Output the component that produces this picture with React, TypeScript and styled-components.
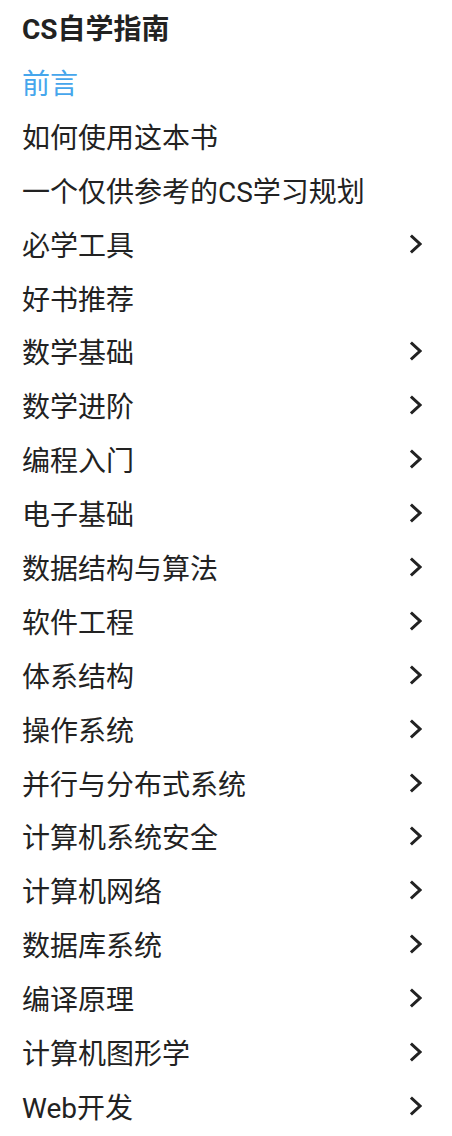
import React from "react";
import styled, { createGlobalStyle } from "styled-components";

const GlobalStyle = createGlobalStyle`
  html, body {
    margin: 0;
    padding: 0;
    background: #ffffff;
  }
  body {
    font-family: Roboto, "Noto Sans CJK SC", sans-serif;
    -webkit-font-smoothing: antialiased;
  }
`;

const items: { label: string; hasChildren: boolean; active?: boolean }[] = [
  { label: "前言", hasChildren: false, active: true },
  { label: "如何使用这本书", hasChildren: false },
  { label: "一个仅供参考的CS学习规划", hasChildren: false },
  { label: "必学工具", hasChildren: true },
  { label: "好书推荐", hasChildren: false },
  { label: "数学基础", hasChildren: true },
  { label: "数学进阶", hasChildren: true },
  { label: "编程入门", hasChildren: true },
  { label: "电子基础", hasChildren: true },
  { label: "数据结构与算法", hasChildren: true },
  { label: "软件工程", hasChildren: true },
  { label: "体系结构", hasChildren: true },
  { label: "操作系统", hasChildren: true },
  { label: "并行与分布式系统", hasChildren: true },
  { label: "计算机系统安全", hasChildren: true },
  { label: "计算机网络", hasChildren: true },
  { label: "数据库系统", hasChildren: true },
  { label: "编译原理", hasChildren: true },
  { label: "计算机图形学", hasChildren: true },
  { label: "Web开发", hasChildren: true },
];

const Chevron = () => (
  <svg width="12" height="20" viewBox="0 0 12 20" fill="none">
    <polyline
      points="2,2.5 10,10 2,17.5"
      stroke="#222"
      strokeWidth="3"
      strokeLinecap="square"
      strokeLinejoin="miter"
    />
  </svg>
);

export default function App() {
  return (
    <>
      <GlobalStyle />
      <Sidebar>
        <Title>CS自学指南</Title>
        <NavList>
          {items.map((item) => (
            <NavItem key={item.label} $active={item.active}>
              <span>{item.label}</span>
              {item.hasChildren && <Chevron />}
            </NavItem>
          ))}
        </NavList>
      </Sidebar>
    </>
  );
}

const Sidebar = styled.nav`
  display: flex;
  flex-direction: column;
  width: 452px;
  box-sizing: border-box;
  padding: 5px 30px 0 22px;
`;

const Title = styled.div`
  height: 50px;
  line-height: 50px;
  font-size: 28px;
  font-weight: 700;
  color: #222222;
`;

const NavList = styled.ul`
  list-style: none;
  margin: 0;
  padding: 0;
`;

const NavItem = styled.li<{ $active?: boolean }>`
  display: flex;
  align-items: center;
  justify-content: space-between;
  height: 53.9px;
  font-size: 28px;
  color: ${(p) => (p.$active ? "#46a6ec" : "#222222")};
  cursor: pointer;
`;
